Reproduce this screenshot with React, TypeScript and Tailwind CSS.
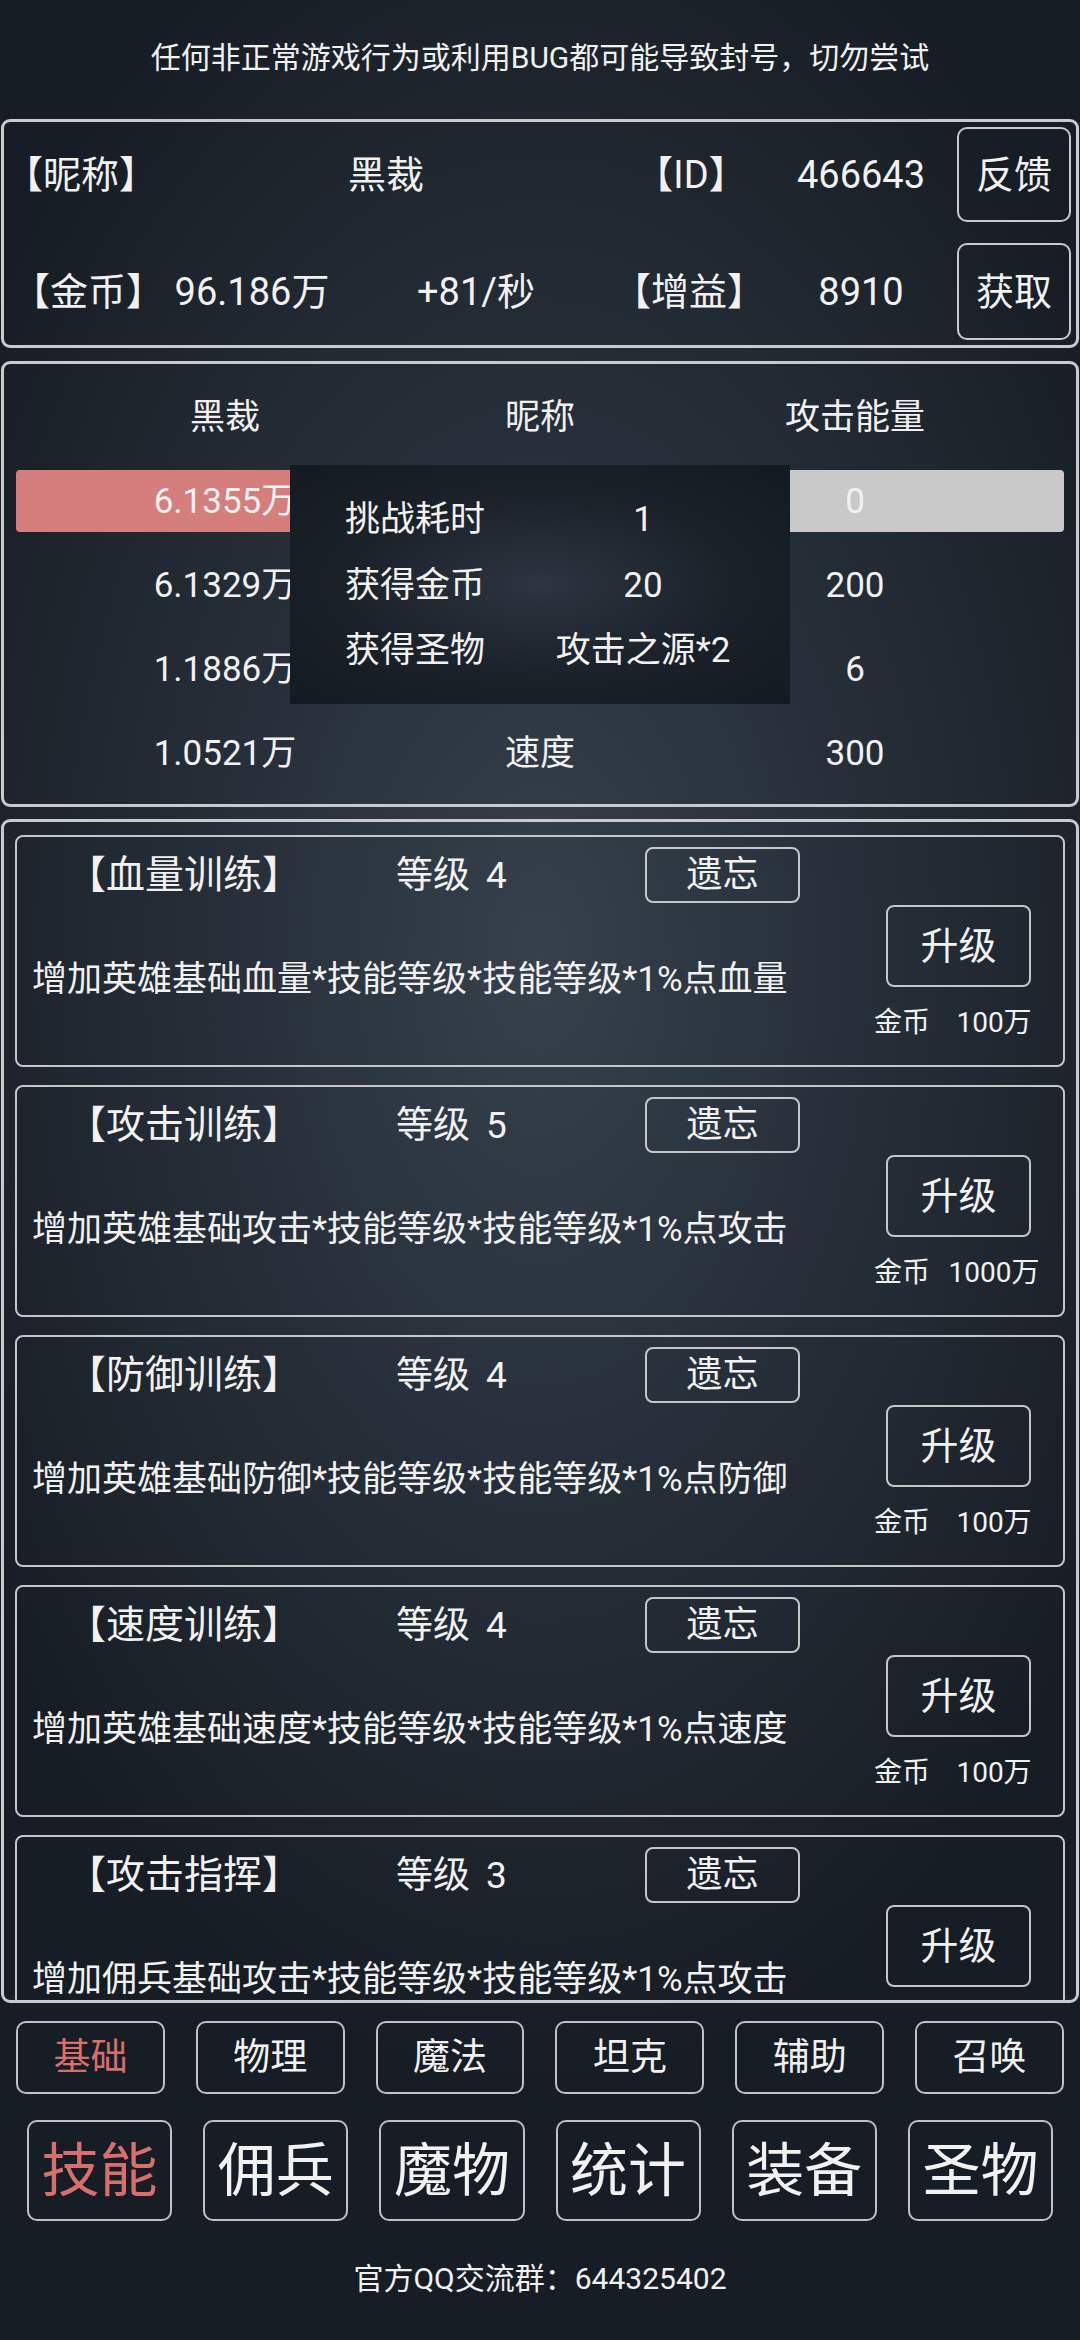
import React from "react";

const skills: { name: string; lv: string; desc: string; cost: string | null }[] = [
  { name: "【血量训练】", lv: "4", desc: "增加英雄基础血量*技能等级*技能等级*1%点血量", cost: "100万" },
  { name: "【攻击训练】", lv: "5", desc: "增加英雄基础攻击*技能等级*技能等级*1%点攻击", cost: "1000万" },
  { name: "【防御训练】", lv: "4", desc: "增加英雄基础防御*技能等级*技能等级*1%点防御", cost: "100万" },
  { name: "【速度训练】", lv: "4", desc: "增加英雄基础速度*技能等级*技能等级*1%点速度", cost: "100万" },
  { name: "【攻击指挥】", lv: "3", desc: "增加佣兵基础攻击*技能等级*技能等级*1%点攻击", cost: null },
];

const subTabs = ["基础", "物理", "魔法", "坦克", "辅助", "召唤"];
const mainTabs = ["技能", "佣兵", "魔物", "统计", "装备", "圣物"];

function SkillCard({ s }: { s: (typeof skills)[number] }) {
  return (
    <div className="flex h-[232px] shrink-0 rounded-[8px] border-2 border-[#c4c6c8]">
      <div className="flex w-[853px] shrink-0 flex-col">
        <div className="flex h-[76px] items-center">
          <div className="w-[379px] pl-[50px] text-[39px] leading-none whitespace-nowrap">{s.name}</div>
          <div className="flex w-[249px] items-center gap-[16px] text-[37px] leading-none">
            <span>等级</span>
            <span>{s.lv}</span>
          </div>
          <div className="flex h-[56px] w-[155px] items-center justify-center rounded-[8px] border-2 border-[#c4c6c8] text-[36px] leading-none">
            遗忘
          </div>
        </div>
        <div className="mt-[43px] pl-[15px] text-[35px] leading-[48px] whitespace-nowrap">{s.desc}</div>
      </div>
      <div className="flex min-w-0 flex-1 flex-col">
        <div className="mt-[68px] ml-[16px] flex h-[82px] w-[145px] items-center justify-center rounded-[8px] border-2 border-[#c4c6c8] text-[38px] leading-none">
          升级
        </div>
        {s.cost && (
          <div className="mt-[18px] flex items-center text-[28px] leading-[36px] whitespace-nowrap">
            <span className="shrink-0 pl-[4px]">金币</span>
            <span className="w-[128px] shrink-0 text-center">{s.cost}</span>
          </div>
        )}
      </div>
    </div>
  );
}

export default function App() {
  return (
    <div className="relative flex h-[2340px] w-[1080px] flex-col overflow-hidden bg-[radial-gradient(ellipse_62%_48%_at_50%_41%,#36414c_0%,#27303a_45%,#171d24_100%)] font-[family-name:Roboto,'Noto_Sans_CJK_SC',sans-serif] text-[#f1f1f1]">
      {/* notice */}
      <div className="flex h-[119px] items-center justify-center pb-[4px] text-[30px] leading-none">
        任何非正常游戏行为或利用BUG都可能导致封号，切勿尝试
      </div>

      {/* account box */}
      <div className="mx-[1px] flex h-[229px] flex-col gap-[21px] rounded-[9px] border-[3px] border-[#c8cacc] pt-[5px]">
        <div className="flex h-[95px] items-center text-[38px] leading-none whitespace-nowrap">
          <div className="flex w-[154px] justify-center">【昵称】</div>
          <div className="flex w-[456px] justify-center">黑裁</div>
          <div className="flex w-[154px] justify-center">【ID】</div>
          <div className="flex w-[186px] justify-center">466643</div>
          <div className="flex-1" />
          <div className="mr-[5px] flex h-[95px] w-[114px] items-center justify-center rounded-[10px] border-2 border-[#c8cacc]">
            反馈
          </div>
        </div>
        <div className="flex h-[97px] items-center text-[38px] leading-none whitespace-nowrap">
          <div className="flex w-[168px] justify-center">【金币】</div>
          <div className="flex w-[160px] justify-center">96.186万</div>
          <div className="flex w-[288px] justify-center">+81/秒</div>
          <div className="flex w-[138px] justify-center">【增益】</div>
          <div className="w-[8px]" />
          <div className="flex w-[190px] justify-center">8910</div>
          <div className="flex-1" />
          <div className="mr-[5px] flex h-[97px] w-[114px] items-center justify-center rounded-[10px] border-2 border-[#c8cacc]">
            获取
          </div>
        </div>
      </div>

      {/* battle box */}
      <div className="relative mx-[1px] mt-[13px] flex h-[446px] flex-col rounded-[9px] border-[3px] border-[#c8cacc] px-[12px] pt-[11px] text-[35px] leading-none">
        <div className="flex h-[84px] items-center">
          <div className="w-[418px] text-center">黑裁</div>
          <div className="flex-1 text-center">昵称</div>
          <div className="w-[418px] text-center">攻击能量</div>
        </div>
        <div className="flex h-[84px] items-center">
          <div className="flex h-[62px] w-[418px] items-center justify-center rounded-[4px] bg-[#d47e7e]">6.1355万</div>
          <div className="flex-1 text-center">血量</div>
          <div className="flex h-[62px] w-[418px] items-center justify-center rounded-[4px] bg-[#c9c9c9]">0</div>
        </div>
        <div className="flex h-[84px] items-center">
          <div className="w-[418px] text-center">6.1329万</div>
          <div className="flex-1 text-center">攻击</div>
          <div className="w-[418px] text-center">200</div>
        </div>
        <div className="flex h-[84px] items-center">
          <div className="w-[418px] text-center">1.1886万</div>
          <div className="flex-1 text-center">防御</div>
          <div className="w-[418px] text-center">6</div>
        </div>
        <div className="flex h-[84px] items-center">
          <div className="w-[418px] text-center">1.0521万</div>
          <div className="flex-1 text-center">速度</div>
          <div className="w-[418px] text-center">300</div>
        </div>

        {/* result popup */}
        <div className="absolute top-[101px] left-[286px] flex h-[239px] w-[500px] flex-col bg-[radial-gradient(ellipse_at_center,#2c3540_0%,#1a2129_55%,#131a21_100%)] pt-[32px]">
          <div className="flex h-[44px] items-center">
            <span className="w-[250px] pl-[55px]">挑战耗时</span>
            <span className="w-[206px] text-center">1</span>
          </div>
          <div className="mt-[22px] flex h-[44px] items-center">
            <span className="w-[250px] pl-[55px]">获得金币</span>
            <span className="w-[206px] text-center">20</span>
          </div>
          <div className="mt-[21px] flex h-[44px] items-center">
            <span className="w-[250px] pl-[55px]">获得圣物</span>
            <span className="w-[206px] text-center">攻击之源*2</span>
          </div>
        </div>
      </div>

      {/* skills list */}
      <div className="mx-[1px] mt-[12px] flex h-[1184px] flex-col gap-[18px] overflow-hidden rounded-[9px] border-[3px] border-[#c8cacc] px-[11px] pt-[13px]">
        {skills.map((s) => (
          <SkillCard key={s.name} s={s} />
        ))}
      </div>

      {/* sub tabs */}
      <div className="mt-[18px] grid grid-cols-6 gap-[31px] px-[16px]">
        {subTabs.map((t, i) => (
          <div
            key={t}
            className={
              i === 0
                ? "flex h-[73px] items-center justify-center rounded-[10px] border-2 border-[#bfc1c3] text-[37px] leading-none text-[#d86f6f]"
                : "flex h-[73px] items-center justify-center rounded-[10px] border-2 border-[#bfc1c3] text-[37px] leading-none"
            }
          >
            {t}
          </div>
        ))}
      </div>

      {/* main tabs */}
      <div className="mt-[26px] grid grid-cols-6 gap-[31px] px-[27px]">
        {mainTabs.map((t, i) => (
          <div
            key={t}
            className={
              i === 0
                ? "flex h-[101px] items-center justify-center rounded-[10px] border-2 border-[#bfc1c3] text-[58px] leading-none text-[#d86f6f]"
                : "flex h-[101px] items-center justify-center rounded-[10px] border-2 border-[#bfc1c3] text-[58px] leading-none"
            }
          >
            {t}
          </div>
        ))}
      </div>

      {/* footer */}
      <div className="flex flex-1 items-center justify-center pb-[4px] text-[30px] leading-none">
        官方QQ交流群：644325402
      </div>
    </div>
  );
}
